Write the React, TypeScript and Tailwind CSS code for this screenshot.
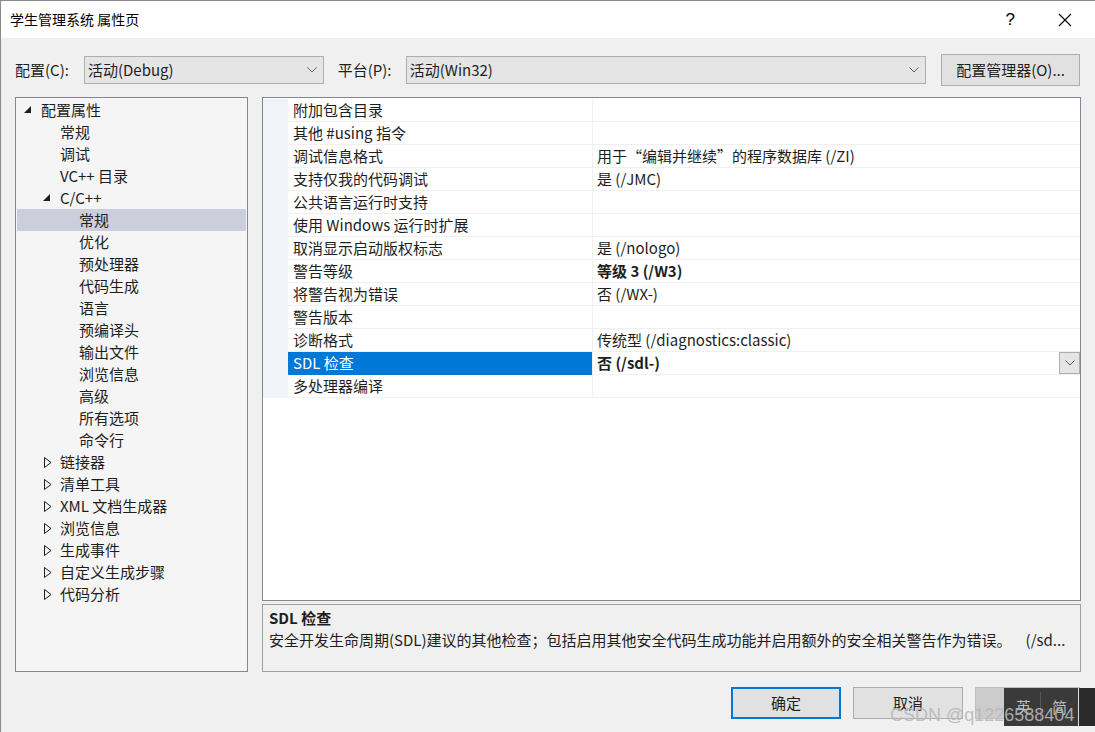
import React from "react";

const FONT = { fontFamily: '"Microsoft YaHei UI","Noto Sans CJK SC","Noto Sans",sans-serif' };

function Chevron({ className = "" }: { className?: string }) {
  return (
    <svg width="10" height="6" viewBox="0 0 10 6" className={className}>
      <path d="M0.5 0.5 L5 5 L9.5 0.5" fill="none" stroke="#606060" strokeWidth="1" />
    </svg>
  );
}

type TreeItem = { label: string; level: number; state?: "open" | "closed"; selected?: boolean };

const tree: TreeItem[] = [
  { label: "配置属性", level: 0, state: "open" },
  { label: "常规", level: 1 },
  { label: "调试", level: 1 },
  { label: "VC++ 目录", level: 1 },
  { label: "C/C++", level: 1, state: "open" },
  { label: "常规", level: 2, selected: true },
  { label: "优化", level: 2 },
  { label: "预处理器", level: 2 },
  { label: "代码生成", level: 2 },
  { label: "语言", level: 2 },
  { label: "预编译头", level: 2 },
  { label: "输出文件", level: 2 },
  { label: "浏览信息", level: 2 },
  { label: "高级", level: 2 },
  { label: "所有选项", level: 2 },
  { label: "命令行", level: 2 },
  { label: "链接器", level: 1, state: "closed" },
  { label: "清单工具", level: 1, state: "closed" },
  { label: "XML 文档生成器", level: 1, state: "closed" },
  { label: "浏览信息", level: 1, state: "closed" },
  { label: "生成事件", level: 1, state: "closed" },
  { label: "自定义生成步骤", level: 1, state: "closed" },
  { label: "代码分析", level: 1, state: "closed" },
];

const rows: { name: string; value: string; bold?: boolean; selected?: boolean }[] = [
  { name: "附加包含目录", value: "" },
  { name: "其他 #using 指令", value: "" },
  { name: "调试信息格式", value: "用于“编辑并继续”的程序数据库 (/ZI)" },
  { name: "支持仅我的代码调试", value: "是 (/JMC)" },
  { name: "公共语言运行时支持", value: "" },
  { name: "使用 Windows 运行时扩展", value: "" },
  { name: "取消显示启动版权标志", value: "是 (/nologo)" },
  { name: "警告等级", value: "等级 3 (/W3)", bold: true },
  { name: "将警告视为错误", value: "否 (/WX-)" },
  { name: "警告版本", value: "" },
  { name: "诊断格式", value: "传统型 (/diagnostics:classic)" },
  { name: "SDL 检查", value: "否 (/sdl-)", bold: true, selected: true },
  { name: "多处理器编译", value: "" },
];

function TreeRow({ item }: { item: TreeItem }) {
  const textLeft = [24, 43, 62][item.level];
  return (
    <div className={`relative h-[22px] flex items-center ${item.selected ? "bg-[#cccedb]" : ""}`}>
      {item.state === "open" && (
        <svg width="8" height="8" viewBox="0 0 8 8" className="absolute" style={{ left: textLeft - 17, top: 7 }}>
          <path d="M7 0 L7 7 L0 7 Z" fill="#1e1e1e" />
        </svg>
      )}
      {item.state === "closed" && (
        <svg width="8" height="11" viewBox="0 0 8 11" className="absolute" style={{ left: textLeft - 16, top: 6 }}>
          <path d="M0.5 0.5 L7 5.5 L0.5 10.5 Z" fill="none" stroke="#1e1e1e" strokeWidth="1" />
        </svg>
      )}
      <span className="absolute text-[15px] text-[#1e1e1e] whitespace-nowrap" style={{ left: textLeft }}>
        {item.label}
      </span>
    </div>
  );
}

export default function App() {
  return (
    <div className="w-[1095px] h-[732px] bg-[#f0f0f0] flex flex-col overflow-hidden relative border-l border-t border-[#8a8a8a]" style={FONT}>
      {/* title bar */}
      <div className="h-[37px] bg-white flex items-center shrink-0">
        <span className="ml-[9px] text-[14px] text-black">学生管理系统 属性页</span>
        <div className="flex-1" />
        <span className="text-[17px] text-black mr-[43px]" style={{ fontFamily: '"Liberation Sans",sans-serif' }}>?</span>
        <svg width="14" height="14" viewBox="0 0 14 14" className="mr-[23px]">
          <path d="M1 1 L13 13 M13 1 L1 13" stroke="#000" strokeWidth="1.1" />
        </svg>
      </div>

      {/* config row */}
      <div className="flex items-center mt-[16px] h-[32px] pl-[14px] pr-[15px]">
        <span className="text-[15px] text-[#1e1e1e] w-[69px]">配置(C):</span>
        <div className="w-[240px] h-[28px] bg-[#e5e5e5] border border-[#adadad] flex items-center px-[3px]">
          <span className="text-[15px] text-[#1e1e1e] flex-1">活动(Debug)</span>
          <Chevron className="mr-[3px]" />
        </div>
        <span className="text-[15px] text-[#1e1e1e] ml-[14px] w-[68px]">平台(P):</span>
        <div className="w-[521px] h-[28px] bg-[#e5e5e5] border border-[#adadad] flex items-center px-[3px]">
          <span className="text-[15px] text-[#1e1e1e] flex-1">活动(Win32)</span>
          <Chevron className="mr-[3px]" />
        </div>
        <div className="ml-[15px] w-[139px] h-[32px] bg-[#e1e1e1] border border-[#adadad] flex items-center justify-center">
          <span className="text-[15px] text-[#1e1e1e]">配置管理器(O)...</span>
        </div>
      </div>

      {/* main */}
      <div className="flex mt-[11px] pl-[14px] pr-[14px] h-[575px]">
        {/* tree */}
        <div className="w-[233px] h-full bg-[#f5f5f5] border border-[#828790] pt-[1px] px-[1px]">
          {tree.map((t, i) => (
            <TreeRow key={i} item={t} />
          ))}
        </div>

        <div className="ml-[14px] flex-1 flex flex-col">
          {/* grid */}
          <div className="h-[504px] bg-white border border-[#828790] pt-[1px]">
            {rows.map((r, i) => (
              <div key={i} className="flex h-[23px]">
                <div className="w-[25px] bg-[#f0f4f9] shrink-0" />
                <div
                  className={`w-[304px] shrink-0 flex items-center pl-[5px] border-b ${
                    r.selected ? "bg-[#0078d7] text-white border-[#0078d7]" : "text-[#1e1e1e] border-[#f0f0f0]"
                  }`}
                >
                  <span className="text-[15px] whitespace-nowrap">{r.name}</span>
                </div>
                <div className="flex-1 flex items-center pl-[4px] border-b border-l border-[#f0f0f0] relative">
                  <span className={`text-[15px] text-[#1e1e1e] whitespace-nowrap ${r.bold ? "font-bold" : ""}`}>{r.value}</span>
                  {r.selected && (
                    <div className="absolute right-0 top-0 w-[21px] h-[22px] bg-[#e5e5e5] border border-[#adadad] flex items-center justify-center">
                      <Chevron />
                    </div>
                  )}
                </div>
              </div>
            ))}
          </div>

          {/* description */}
          <div className="mt-[3px] h-[68px] bg-[#f0f0f0] border border-[#a0a0a0] px-[6px] pt-[2px]">
            <div className="text-[15px] font-bold text-[#1e1e1e] leading-[21px]">SDL 检查</div>
            <div className="flex text-[15px] text-[#1e1e1e] leading-[22px] mt-[1px]">
              <span className="whitespace-nowrap">安全开发生命周期(SDL)建议的其他检查；包括启用其他安全代码生成功能并启用额外的安全相关警告作为错误。</span>
              <span className="ml-[14px] whitespace-nowrap">(/sd...</span>
            </div>
          </div>
        </div>
      </div>

      {/* buttons */}
      <div className="flex justify-end pr-[15px] mt-[15px] gap-[12px]">
        <div className="w-[110px] h-[32px] bg-[#e1e1e1] border-2 border-[#0078d7] flex items-center justify-center">
          <span className="text-[15px] text-[#1e1e1e]">确定</span>
        </div>
        <div className="w-[110px] h-[32px] bg-[#e1e1e1] border border-[#adadad] flex items-center justify-center">
          <span className="text-[15px] text-[#1e1e1e]">取消</span>
        </div>
        <div className="w-[105px] h-[32px] bg-[#cccccc] border border-[#bfbfbf] flex items-center justify-center">
          <span className="text-[15px] text-[#a0a0a0]">应用(A)</span>
        </div>
      </div>

      {/* IME overlay */}
      <div className="absolute left-[1003px] top-[687px] w-[74px] h-[38px] bg-[#3a3a3a] flex items-center">
        <span className="text-[15px] text-[#bdbdbd] ml-[12px]">英</span>
        <div className="w-[1px] h-[30px] bg-[#555] ml-[9px]" />
        <span className="text-[15px] text-[#bdbdbd] ml-[11px]">简</span>
      </div>
      <div className="absolute left-[1077px] top-[687px] w-[18px] h-[38px] bg-[#2a2a2a] border-l border-[#dddddd]" />
      {/* watermark */}
      <div className="absolute left-[889px] top-[701px] text-[18px] text-[#b8b8b8]/90 whitespace-nowrap" style={{ fontFamily: '"Liberation Sans",sans-serif' }}>
        CSDN @q1226588404
      </div>
    </div>
  );
}
